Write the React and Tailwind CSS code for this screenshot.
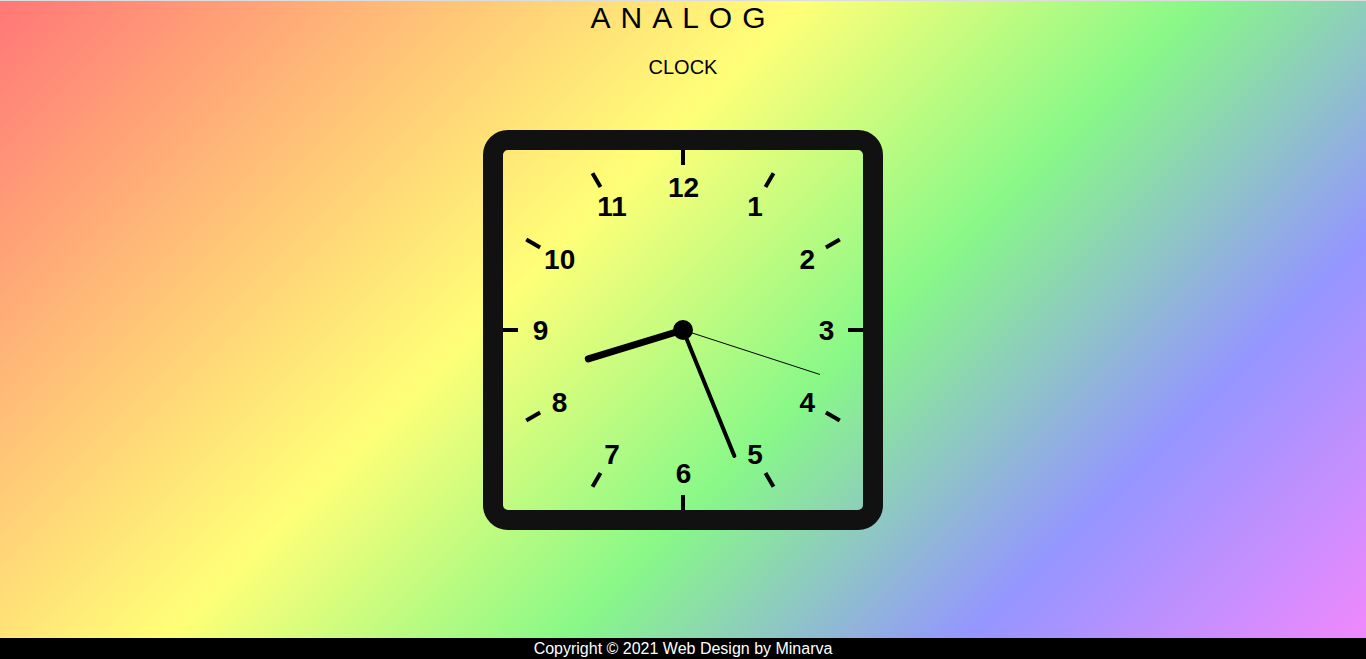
const numbers = [12, 1, 2, 3, 4, 5, 6, 7, 8, 9, 10, 11];

// fixed time taken from the screenshot: 8:26:18
const hours = 8;
const minutes = 26;
const seconds = 18;

function polar(angleDeg, r) {
    const a = (angleDeg * Math.PI) / 180;
    return { x: 180 + r * Math.sin(a), y: 180 - r * Math.cos(a) };
}

function Hand({ angle, length, width }) {
    const end = polar(angle, length);
    return <line x1="180" y1="180" x2={end.x} y2={end.y} stroke="#000" strokeWidth={width} strokeLinecap={width > 2 ? "round" : "butt"} />;
}

function Clock() {
    const hourAngle = (hours % 12) * 30 + minutes * 0.5;
    const minuteAngle = minutes * 6 + seconds * 0.1;
    const secondAngle = seconds * 6;
    return (
        <div className="w-[400px] h-[400px] rounded-[25px] border-[20px] border-[#111111]">
            <div className="relative w-[360px] h-[360px]">
                <svg width="360" height="360" viewBox="0 0 360 360" className="absolute left-0 top-0">
                    {numbers.map((n, i) => {
                        const a = polar(i * 30, 165);
                        const b = polar(i * 30, 181);
                        return <line key={n} x1={a.x} y1={a.y} x2={b.x} y2={b.y} stroke="#000" strokeWidth="4" />;
                    })}
                </svg>
                {numbers.map((n, i) => {
                    const p = polar(i * 30, 143);
                    return (
                        <span
                            key={n}
                            className="absolute -translate-x-1/2 -translate-y-1/2 text-[28px] font-bold text-black leading-none"
                            style={{ left: p.x + 0.5, top: p.y + 1 }}
                        >
                            {n}
                        </span>
                    );
                })}
                <svg width="360" height="360" viewBox="0 0 360 360" className="absolute left-0 top-0">
                    <Hand angle={hourAngle} length={99} width={7} />
                    <Hand angle={minuteAngle} length={136} width={4} />
                    <Hand angle={secondAngle} length={144} width={1} />
                    <circle cx="180" cy="180" r="10" fill="#000" />
                </svg>
            </div>
        </div>
    );
}

export default function App() {
    return (
        <div className="flex min-h-screen flex-col font-['Liberation_Sans',Arial,sans-serif] border-t border-[#dddddd]">
            <main className="flex flex-1 flex-col items-center bg-[linear-gradient(135deg,#ff7777_0%,#ffff77_40%,#88f888_60%,#9496ff_80%,#f088fc_100%)]">
                <h1 className="text-[30px] leading-[34px] font-normal tracking-[10px] text-black">ANALOG</h1>
                <p className="mt-[21px] text-[20px] leading-[23px] text-black">CLOCK</p>
                <div className="mt-[51px]">
                    <Clock />
                </div>
            </main>
            <footer className="h-[21px] bg-black text-center text-[16px] leading-[21px] text-white">
                Copyright © 2021 Web Design by Minarva
            </footer>
        </div>
    );
}
